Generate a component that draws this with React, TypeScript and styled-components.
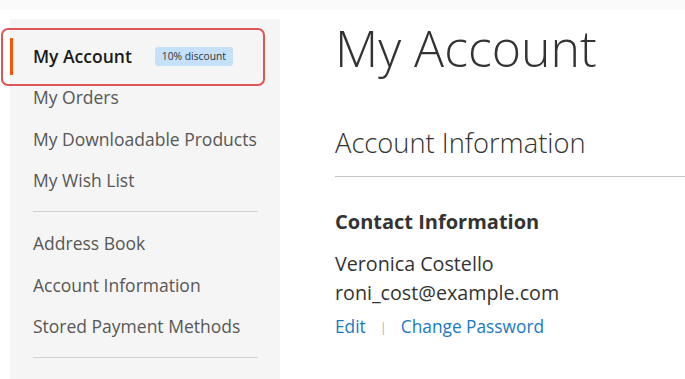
import React from 'react';
import styled, { createGlobalStyle } from 'styled-components';

const GlobalStyle = createGlobalStyle`
  html, body {
    margin: 0;
    padding: 0;
    background: #ffffff;
    font-family: 'Open Sans', 'Liberation Sans', sans-serif;
    color: #333333;
  }
`;

const Page = styled.div`
  width: 685px;
  height: 379px;
  overflow: hidden;
`;

const TopBand = styled.div`
  height: 10px;
  background: #fafafa;
`;

const Columns = styled.div`
  display: flex;
  align-items: flex-start;
  padding: 9px 0 0 10px;
`;

const Sidebar = styled.nav`
  width: 270px;
  height: 360px;
  flex-shrink: 0;
  background: #f5f5f5;
  padding-top: 18.5px;
  box-sizing: border-box;
`;

const NavGroup = styled.ul`
  list-style: none;
  margin: 0;
  padding: 0;
  display: flex;
  flex-direction: column;
  gap: 4.3px;
`;

const NavItem = styled.li<{ $active?: boolean }>`
  position: relative;
  display: flex;
  align-items: center;
  height: 37px;
  padding-left: 20px;
  border-left: 3px solid ${p => (p.$active ? '#ff5501' : 'transparent')};
  font-size: 17.5px;
  font-weight: ${p => (p.$active ? 600 : 400)};
  color: ${p => (p.$active ? '#1a1a1a' : '#575757')};
  white-space: nowrap;
`;

const Badge = styled.span`
  margin-left: 23px;
  background: #c5e1fa;
  color: #333;
  font-size: 10.3px;
  font-weight: 400;
  line-height: 19px;
  padding: 0 7px;
  border-radius: 3px;
`;

const Highlight = styled.span`
  position: absolute;
  left: -12px;
  top: -10px;
  width: 264px;
  height: 58px;
  border: 2px solid #e05555;
  border-radius: 7px;
  box-sizing: border-box;
  pointer-events: none;
`;

const Divider = styled.hr`
  border: 0;
  border-top: 1px solid #d1d1d1;
  margin: 12.5px 22px 13px 23px;
`;

const Content = styled.main`
  flex: 1;
  padding-left: 55px;
  min-width: 0;
`;

const Title = styled.h1`
  margin: 0;
  font-size: 50px;
  font-weight: 300;
  line-height: 58px;
  color: #333;
  white-space: nowrap;
`;

const BlockTitle = styled.h2`
  margin: 48px -20px 0 0;
  padding-bottom: 15px;
  border-bottom: 1px solid #c6c6c6;
  font-size: 27.3px;
  font-weight: 300;
  line-height: 36px;
  color: #333;
`;

const BoxTitle = styled.h3`
  margin: 32px 0 14px;
  font-size: 20px;
  font-weight: 700;
  line-height: 26px;
  color: #333;
`;

const BoxLine = styled.p`
  margin: 0;
  font-size: 19.7px;
  line-height: 29px;
  color: #333;
`;

const Actions = styled.div`
  display: flex;
  align-items: center;
  margin-top: 7px;
  font-size: 17.3px;
  line-height: 26px;
`;

const ActionLink = styled.a`
  color: #1979c3;
  text-decoration: none;
`;

const Sep = styled.span`
  color: #b3b3b3;
  margin: 0 14px 0 14px;
  font-size: 13px;
`;

const firstGroup = ['My Orders', 'My Downloadable Products', 'My Wish List'];
const secondGroup = ['Address Book', 'Account Information', 'Stored Payment Methods'];

export default function App() {
  return (
    <Page>
      <GlobalStyle />
      <TopBand />
      <Columns>
        <Sidebar>
          <NavGroup>
            <NavItem $active>
              My Account
              <Badge>10% discount</Badge>
              <Highlight />
            </NavItem>
            {firstGroup.map(label => (
              <NavItem key={label}>{label}</NavItem>
            ))}
          </NavGroup>
          <Divider />
          <NavGroup>
            {secondGroup.map(label => (
              <NavItem key={label}>{label}</NavItem>
            ))}
          </NavGroup>
          <Divider />
        </Sidebar>
        <Content>
          <Title>My Account</Title>
          <BlockTitle>Account Information</BlockTitle>
          <BoxTitle>Contact Information</BoxTitle>
          <BoxLine>Veronica Costello</BoxLine>
          <BoxLine>roni_cost@example.com</BoxLine>
          <Actions>
            <ActionLink href="#">Edit</ActionLink>
            <Sep>|</Sep>
            <ActionLink href="#">Change Password</ActionLink>
          </Actions>
        </Content>
      </Columns>
    </Page>
  );
}
